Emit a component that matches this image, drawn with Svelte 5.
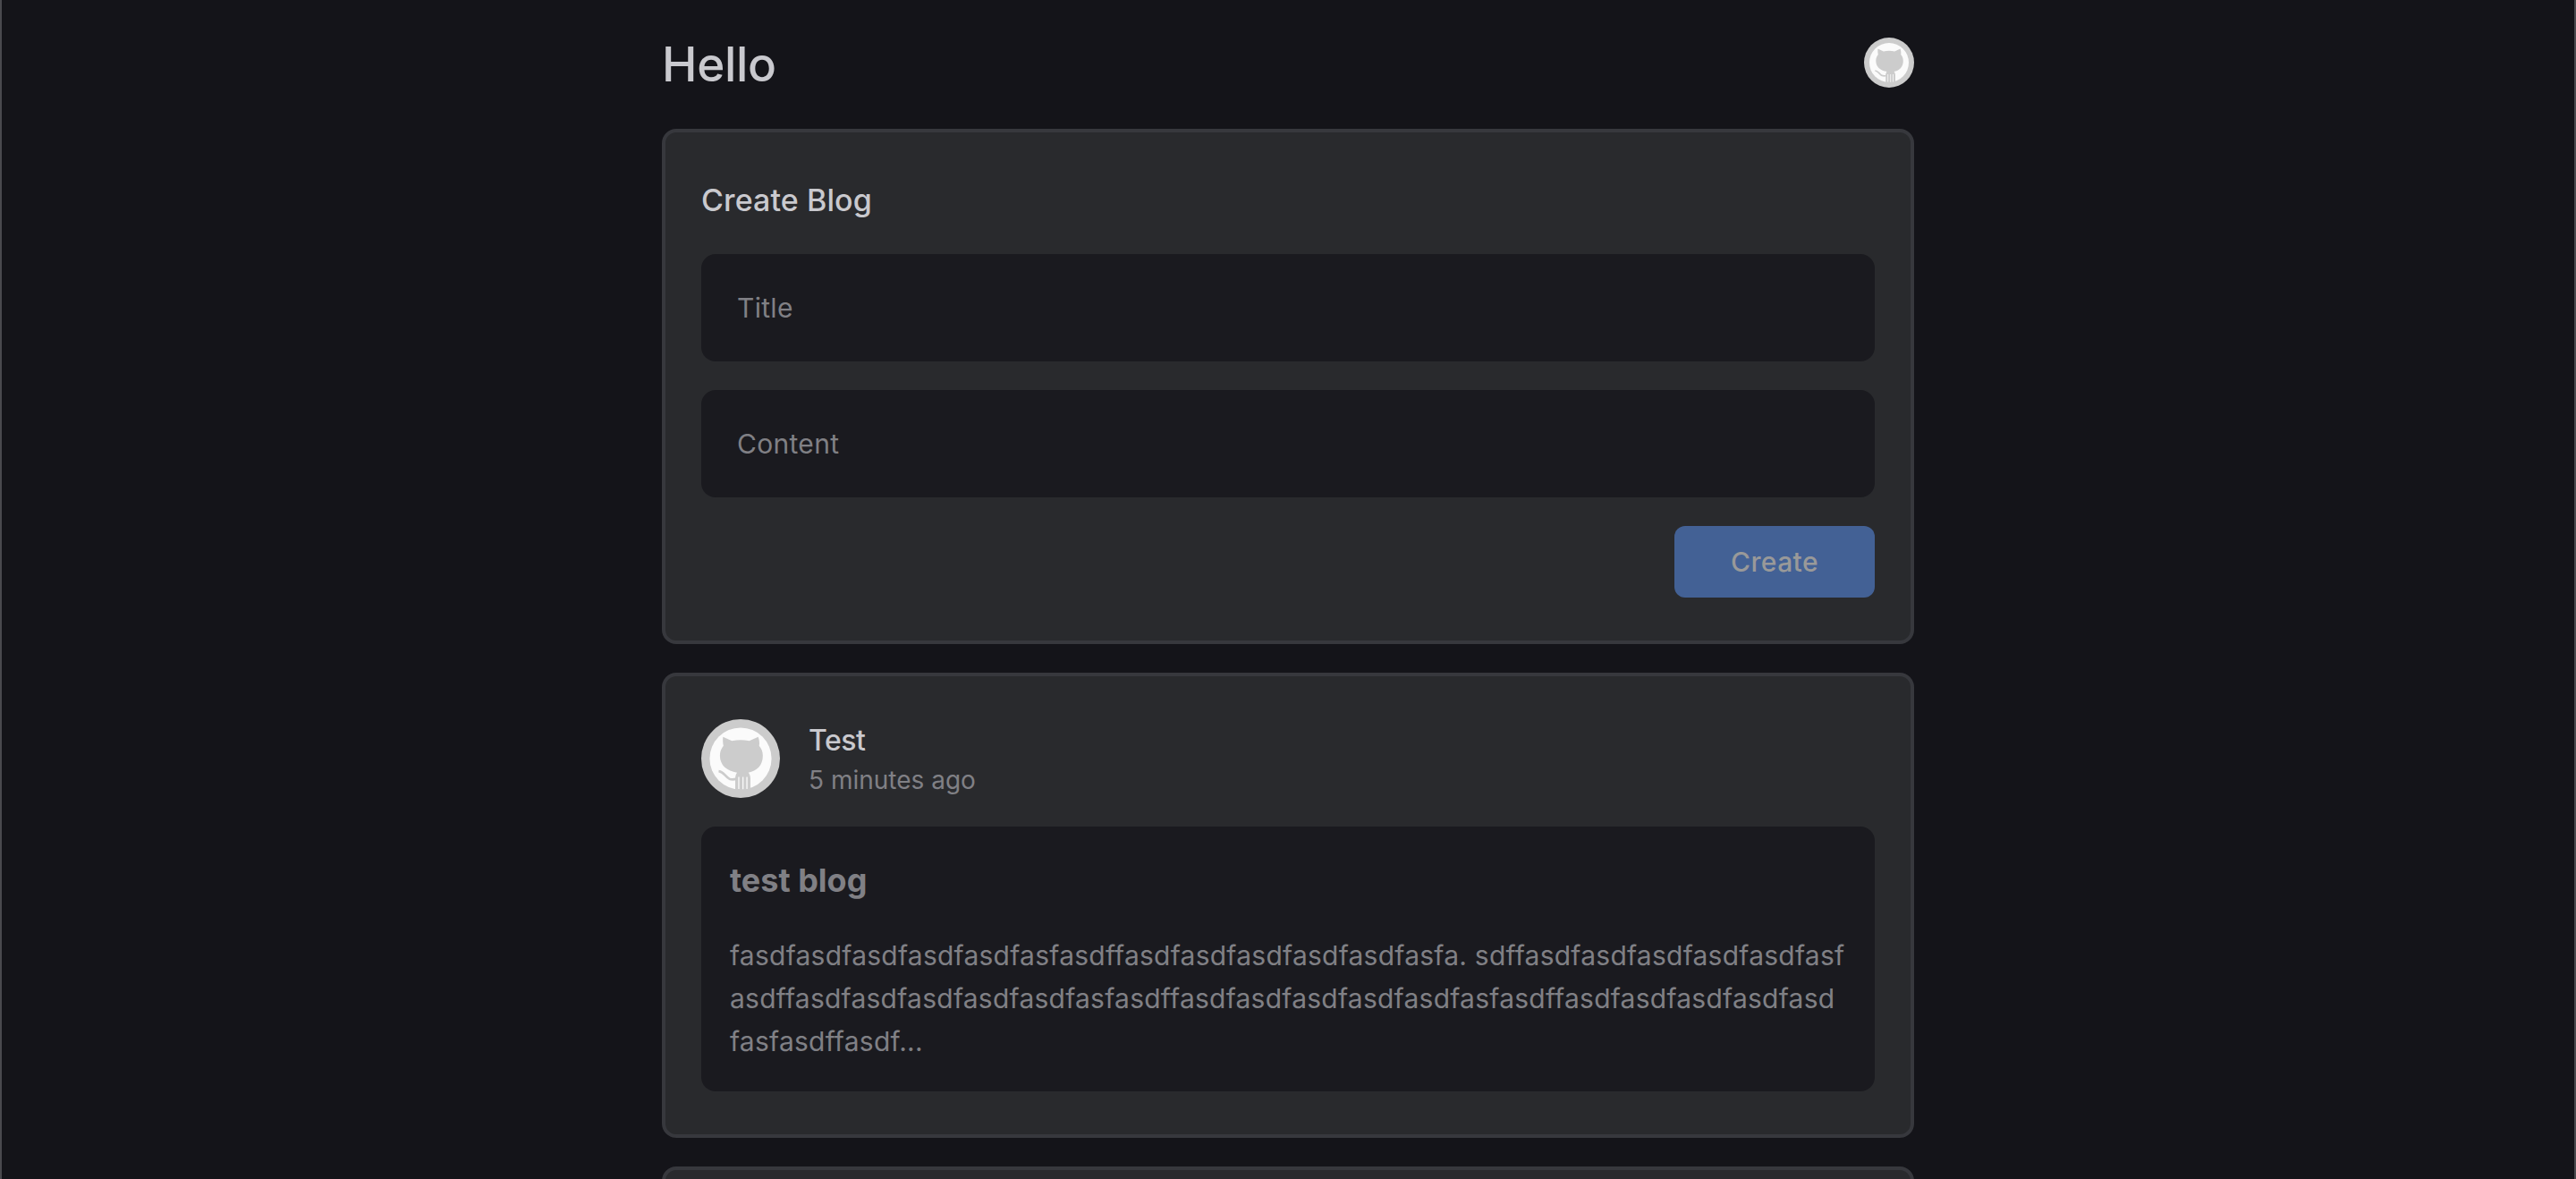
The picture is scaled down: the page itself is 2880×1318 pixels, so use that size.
<script lang="ts">
  const posts = [
    {
      name: 'Test',
      time: '5 minutes ago',
      title: 'test blog',
      body: 'fasdfasdfasdfasdfasdfasfasdffasdfasdfasdfasdfasdfasfa. sdffasdfasdfasdfasdfasdfasf\nasdffasdfasdfasdfasdfasdfasfasdffasdfasdfasdfasdfasdfasfasdffasdfasdfasdfasdfasd\nfasfasdffasdf...'
    }
  ]
</script>

{#snippet octocat(cls)}
  <svg class={cls} viewBox="0 0 56 56" aria-hidden="true">
    <circle cx="28" cy="28" r="28" fill="#cccccc" />
    <circle cx="28" cy="28" r="22" fill="#fbfbfb" />
    <path
      fill="#cccccc"
      d="M15.500 12.500 21.800 15.400C25.800 14.500 30.200 14.500 34.200 15.400L40.500 12.500C41.300 14.500 41.600 17 41.200 19 42.900 21 43.800 23.200 43.800 26 43.800 33 39.500 37 33.500 38 34.500 39 35 40.500 35 42.500V52H24.200V42.500C24.200 40.500 24.700 39 25.500 38 18.500 37 13.300 33 13.300 26 13.300 23.200 14.200 21 15.800 19 15.400 17 15.200 14.500 15.500 12.500Z"
    />
    <path
      fill="none"
      stroke="#cccccc"
      stroke-width="1.700"
      d="M12.400 37C16.200 37.400 17 41 20 42.400 21.600 43 23 43 24.800 42.500"
    />
    <path
      fill="none"
      stroke="#fbfbfb"
      stroke-width="0.800"
      d="M26.700 41V49.600M29.700 41V49.800M32.500 41V49.600"
    />
  </svg>
{/snippet}

<div class="page">
  <header class="top">
    <h1>Hello</h1>
    {@render octocat('avatar-sm')}
  </header>

  <section class="card">
    <h2>Create Blog</h2>
    <form class="create" on:submit|preventDefault>
      <input type="text" placeholder="Title" />
      <input type="text" placeholder="Content" />
      <div class="actions">
        <button type="submit" disabled>Create</button>
      </div>
    </form>
  </section>

  {#each posts as post}
    <article class="card">
      <div class="author">
        {@render octocat('avatar')}
        <div class="meta">
          <span class="name">{post.name}</span>
          <span class="time">{post.time}</span>
        </div>
      </div>
      <div class="content">
        <h3>{post.title}</h3>
        <p>{post.body}</p>
      </div>
    </article>
  {/each}

  <!-- next post, only its top edge is on screen -->
  <div class="card next"></div>
</div>

<style>
  :global(html),
  :global(body) {
    margin: 0;
    height: 100%;
    overflow: hidden;
    background: #141419;
  }

  .page {
    box-sizing: border-box;
    height: 100vh;
    overflow: hidden;
    border-left: 2px solid #4a4a4e;
    border-right: 2px solid #4a4a4e;
    display: flex;
    flex-direction: column;
    align-items: center;
    font-family: Inter, 'Liberation Sans', sans-serif;
    color: #c9c9ce;
  }

  .top {
    width: 1400px;
    height: 144px;
    flex: none;
    display: flex;
    justify-content: space-between;
    align-items: center;
  }

  h1 {
    margin: 0;
    font-size: 53px;
    font-weight: 500;
    line-height: 1;
    letter-spacing: -0.3px;
  }

  .avatar-sm {
    width: 56px;
    height: 56px;
    display: block;
    margin-bottom: 4px;
  }

  .card {
    box-sizing: border-box;
    width: 1400px;
    flex: none;
    margin-bottom: 32px;
    padding: 48px 40px;
    background: #292a2d;
    border: 4px solid #37383d;
    border-radius: 16px;
  }

  .next {
    height: 200px;
  }

  h2 {
    margin: 0 0 32px;
    font-size: 34px;
    font-weight: 500;
    line-height: 56px;
    letter-spacing: 0.1px;
  }

  .create {
    display: flex;
    flex-direction: column;
    gap: 32px;
  }

  input {
    box-sizing: border-box;
    width: 100%;
    height: 120px;
    padding: 0 40px;
    background: #1a1a1f;
    border: none;
    border-radius: 16px;
    font: 400 30px Inter, sans-serif;
    letter-spacing: 0.3px;
    color: #c9c9ce;
    outline: none;
  }

  input::placeholder {
    color: #808085;
    opacity: 1;
  }

  .actions {
    display: flex;
    justify-content: flex-end;
  }

  button {
    width: 224px;
    height: 80px;
    background: #436195;
    color: #999999;
    border: none;
    border-radius: 12px;
    font: 500 30px Inter, sans-serif;
    letter-spacing: 0.4px;
  }

  .author {
    display: flex;
    align-items: center;
    gap: 32px;
    margin-bottom: 32px;
  }

  .avatar {
    width: 88px;
    height: 88px;
    display: block;
  }

  .meta {
    display: flex;
    flex-direction: column;
    gap: 4px;
    padding-top: 4px;
  }

  .name {
    font-size: 32px;
    font-weight: 500;
    line-height: 40px;
    letter-spacing: -0.5px;
  }

  .time {
    font-size: 28px;
    line-height: 40px;
    color: #808085;
  }

  .content {
    background: #1a1a1f;
    border-radius: 16px;
    padding: 32px;
  }

  h3 {
    margin: 0 0 32px;
    font-size: 36px;
    font-weight: 700;
    line-height: 56px;
    color: #808085;
  }

  p {
    margin: 0;
    font-size: 30px;
    line-height: 48px;
    letter-spacing: 0.24px;
    color: #808085;
    white-space: pre-line;
  }
</style>
